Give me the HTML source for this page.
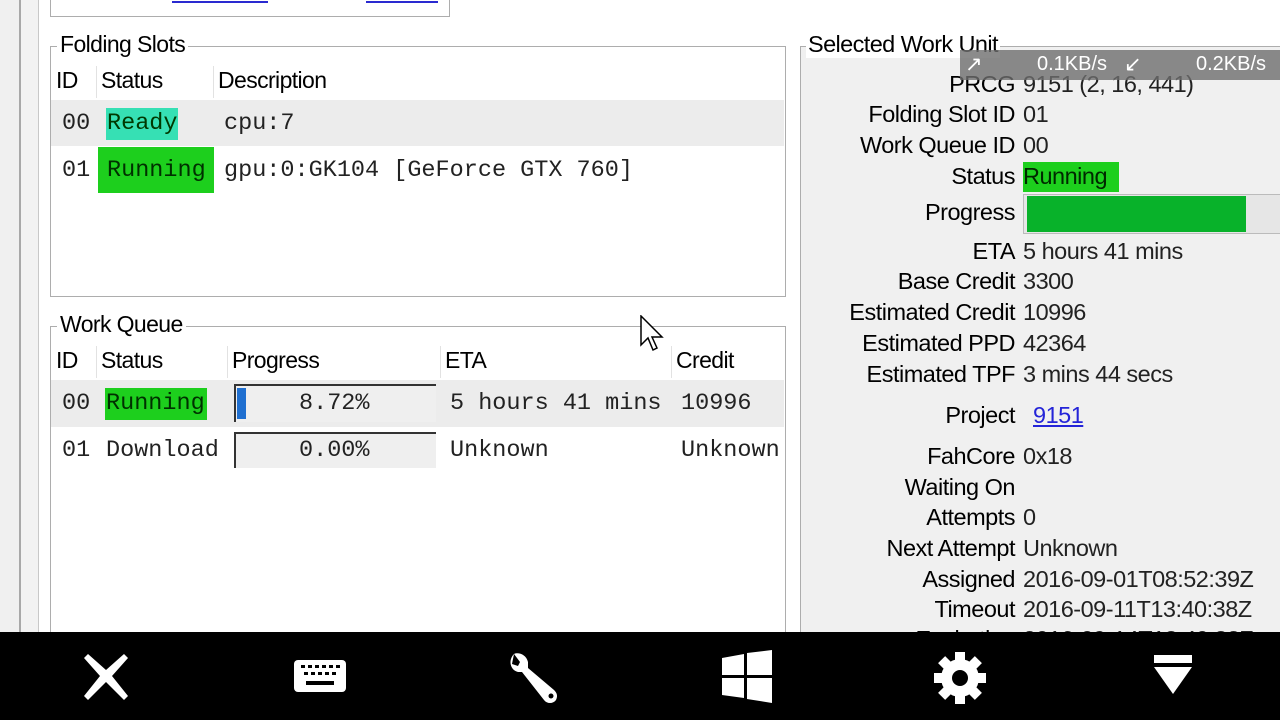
<!DOCTYPE html>
<html><head><meta charset="utf-8"><style>
*{margin:0;padding:0;box-sizing:border-box}
body{width:1280px;height:720px;overflow:hidden;background:#fff;position:relative;font-family:"Liberation Sans",sans-serif;color:#000}
.a{position:absolute;white-space:nowrap}
.s{font-size:23px;letter-spacing:-0.6px}
.m{font-family:"Liberation Mono",monospace;font-size:23.5px;color:#222}
.box{position:absolute;border:1px solid #adadad}
.lbl{position:absolute;right:265px;font-size:23.5px;letter-spacing:-0.5px;text-align:right;white-space:nowrap}
.val{position:absolute;left:1023px;font-size:23.5px;letter-spacing:-0.5px;color:#222;white-space:nowrap}
.sep{position:absolute;width:1px;background:#e2e2e2}
.ic{position:absolute;top:650px}
</style></head><body>
<div class="a" style="left:0;top:0;width:19px;height:632px;background:#f0f0f0"></div>
<div class="a" style="left:19px;top:0;width:2px;height:632px;background:#a8a8a8"></div>
<div class="a" style="left:21px;top:0;width:17px;height:632px;background:#f2f2f2"></div>
<div class="a" style="left:38px;top:0;width:1px;height:632px;background:#c8c8c8"></div>

<!-- top box -->
<div class="box" style="left:50px;top:-10px;width:400px;height:27px"></div>
<div class="a" style="left:172px;top:1px;width:96px;height:2px;background:#2a2ad0"></div>
<div class="a" style="left:366px;top:1px;width:72px;height:2px;background:#2a2ad0"></div>

<!-- Folding slots -->
<div class="box" style="left:50px;top:46px;width:736px;height:251px"></div>
<div class="a s" style="left:57px;top:31px;background:#fff;padding:0 3px">Folding Slots</div>
<div class="sep" style="left:96px;top:66px;height:32px"></div>
<div class="sep" style="left:213px;top:66px;height:32px"></div>
<div class="a s" style="left:56px;top:67px">ID</div>
<div class="a s" style="left:101px;top:67px">Status</div>
<div class="a s" style="left:218px;top:67px">Description</div>
<div class="a" style="left:51px;top:100px;width:733px;height:46px;background:#ececec"></div>
<div class="a" style="left:106px;top:108px;width:72px;height:32px;background:#36e0b4"></div>
<div class="a" style="left:98px;top:147px;width:116px;height:46px;background:#1dcf1d"></div>
<div class="a m" style="left:62px;top:110px">00</div>
<div class="a m" style="left:107px;top:110px;color:#003800">Ready</div>
<div class="a m" style="left:224px;top:110px">cpu:7</div>
<div class="a m" style="left:62px;top:157px">01</div>
<div class="a m" style="left:107px;top:157px;color:#003000">Running</div>
<div class="a m" style="left:224px;top:157px">gpu:0:GK104 [GeForce GTX 760]</div>

<!-- Work queue -->
<div class="box" style="left:50px;top:326px;width:736px;height:320px"></div>
<div class="a s" style="left:57px;top:311px;background:#fff;padding:0 3px">Work Queue</div>
<div class="sep" style="left:96px;top:346px;height:32px"></div>
<div class="sep" style="left:227px;top:346px;height:32px"></div>
<div class="sep" style="left:440px;top:346px;height:32px"></div>
<div class="sep" style="left:671px;top:346px;height:32px"></div>
<div class="a s" style="left:56px;top:347px">ID</div>
<div class="a s" style="left:101px;top:347px">Status</div>
<div class="a s" style="left:232px;top:347px">Progress</div>
<div class="a s" style="left:445px;top:347px">ETA</div>
<div class="a s" style="left:676px;top:347px">Credit</div>
<div class="a" style="left:51px;top:380px;width:733px;height:47px;background:#ececec"></div>
<div class="a" style="left:105px;top:388px;width:102px;height:32px;background:#1dcf1d"></div>
<div class="a" style="left:234px;top:384px;width:202px;height:38px;background:#efefef;border-top:2px solid #333;border-left:2px solid #333"></div>
<div class="a" style="left:237px;top:388px;width:9px;height:31px;background:#1f6fd0"></div>
<div class="a" style="left:234px;top:432px;width:202px;height:36px;background:#efefef;border-top:2px solid #333;border-left:2px solid #333"></div>
<div class="a m" style="left:62px;top:390px">00</div>
<div class="a m" style="left:106px;top:390px;color:#003000">Running</div>
<div class="a m" style="left:299px;top:390px">8.72%</div>
<div class="a m" style="left:450px;top:390px">5 hours 41 mins</div>
<div class="a m" style="left:681px;top:390px">10996</div>
<div class="a m" style="left:62px;top:437px">01</div>
<div class="a m" style="left:106px;top:437px">Download</div>
<div class="a m" style="left:299px;top:437px">0.00%</div>
<div class="a m" style="left:450px;top:437px">Unknown</div>
<div class="a m" style="left:681px;top:437px">Unknown</div>

<!-- right panel -->
<div class="a" style="left:786px;top:0;width:494px;height:632px;background:#fff"></div>
<div class="box" style="left:800px;top:46px;width:500px;height:600px;background:#f0f0f0"></div>
<div class="a s" style="left:806px;top:31px;background:#fff;padding:0 2px;font-size:23.5px">Selected Work Unit</div>
<div class="lbl" style="top:71px">PRCG</div><div class="val" style="top:71px">9151 (2, 16, 441)</div>
<div class="lbl" style="top:101px">Folding Slot ID</div><div class="val" style="top:101px">01</div>
<div class="lbl" style="top:132px">Work Queue ID</div><div class="val" style="top:132px">00</div>
<div class="a" style="left:1023px;top:162px;width:96px;height:30px;background:#1dcf1d"></div>
<div class="lbl" style="top:163px">Status</div><div class="val" style="top:163px;color:#002800">Running</div>
<div class="a" style="left:1023px;top:194px;width:260px;height:40px;background:#e6e6e6;border:1px solid #bbb"></div>
<div class="a" style="left:1027px;top:196px;width:219px;height:36px;background:#08b22a"></div>
<div class="lbl" style="top:199px">Progress</div>
<div class="lbl" style="top:238px">ETA</div><div class="val" style="top:238px">5 hours 41 mins</div>
<div class="lbl" style="top:268px">Base Credit</div><div class="val" style="top:268px">3300</div>
<div class="lbl" style="top:299px">Estimated Credit</div><div class="val" style="top:299px">10996</div>
<div class="lbl" style="top:330px">Estimated PPD</div><div class="val" style="top:330px">42364</div>
<div class="lbl" style="top:361px">Estimated TPF</div><div class="val" style="top:361px">3 mins 44 secs</div>
<div class="lbl" style="top:402px">Project</div><div class="val" style="top:402px;left:1033px;color:#2424d8;text-decoration:underline">9151</div>
<div class="lbl" style="top:443px">FahCore</div><div class="val" style="top:443px">0x18</div>
<div class="lbl" style="top:474px">Waiting On</div>
<div class="lbl" style="top:504px">Attempts</div><div class="val" style="top:504px">0</div>
<div class="lbl" style="top:535px">Next Attempt</div><div class="val" style="top:535px">Unknown</div>
<div class="lbl" style="top:566px">Assigned</div><div class="val" style="top:566px">2016-09-01T08:52:39Z</div>
<div class="lbl" style="top:596px">Timeout</div><div class="val" style="top:596px">2016-09-11T13:40:38Z</div>
<div class="lbl" style="top:626px">Expiration</div><div class="val" style="top:626px">2016-09-14T13:40:38Z</div>

<!-- net overlay -->
<div class="a" style="left:960px;top:50px;width:320px;height:30px;background:rgba(110,110,110,0.8)"></div>
<div class="a" style="left:965px;top:52px;color:#fff;font-size:21px">↗</div>
<div class="a" style="left:1037px;top:53px;color:#fff;font-size:20px">0.1KB/s</div>
<div class="a" style="left:1124px;top:52px;color:#fff;font-size:21px">↙</div>
<div class="a" style="left:1196px;top:53px;color:#fff;font-size:20px">0.2KB/s</div>

<!-- cursor -->
<svg class="a" style="left:640px;top:315px" width="26" height="40" viewBox="0 0 26 40"><path d="M1 1 L1 30 L8 23 L13 35 L17 33 L12 22 L22 22 Z" fill="#fff" stroke="#000" stroke-width="1.5"/></svg>

<!-- bottom bar -->
<div class="a" style="left:0;top:632px;width:1280px;height:88px;background:#000"></div>
<svg class="ic" style="left:80px" width="52" height="52" viewBox="0 0 52 52"><path d="M8 4 L26 20 L44 4 L48 8 L32 26 L48 46 L44 50 L26 32 L8 50 L4 46 L20 26 L4 8 Z" fill="#fff"/></svg>
<svg class="ic" style="left:292px" width="56" height="52" viewBox="0 0 56 52"><rect x="2" y="10" width="52" height="32" rx="4" fill="#fff"/><g fill="#000"><rect x="9" y="15" width="4" height="3"/><rect x="16" y="15" width="4" height="3"/><rect x="23" y="15" width="4" height="3"/><rect x="30" y="15" width="4" height="3"/><rect x="37" y="15" width="4" height="3"/><rect x="44" y="15" width="4" height="3"/><rect x="12" y="22" width="4" height="3"/><rect x="19" y="22" width="4" height="3"/><rect x="26" y="22" width="4" height="3"/><rect x="33" y="22" width="4" height="3"/><rect x="40" y="22" width="4" height="3"/><rect x="14" y="31" width="28" height="4"/></g></svg>
<svg class="ic" style="left:506px" width="56" height="56" viewBox="0 0 56 56"><path d="M8 4 C2 10 4 20 12 22 L16 22 L38 50 C41 54 47 54 50 50 C52 46 51 43 48 40 L22 18 L22 12 C20 4 12 2 8 4 L14 12 L12 16 L6 14 Z" fill="#fff"/><circle cx="45" cy="46" r="2.5" fill="#000"/></svg>
<svg class="ic" style="left:720px" width="54" height="54" viewBox="0 0 54 54"><path d="M2 8 L24 4 L24 25 L2 25 Z M27 3 L52 0 L52 25 L27 25 Z M2 28 L24 28 L24 48 L2 45 Z M27 28 L52 28 L52 53 L27 49 Z" fill="#fff"/></svg>
<svg class="ic" style="left:932px" width="56" height="56" viewBox="0 0 56 56"><g fill="#fff" transform="translate(28 28)"><circle r="19"/><g><rect x="-5" y="-26" width="10" height="12"/><rect x="-5" y="14" width="10" height="12"/><rect x="-26" y="-5" width="12" height="10"/><rect x="14" y="-5" width="12" height="10"/><rect x="-5" y="-26" width="10" height="12" transform="rotate(45)"/><rect x="-5" y="-26" width="10" height="12" transform="rotate(135)"/><rect x="-5" y="-26" width="10" height="12" transform="rotate(225)"/><rect x="-5" y="-26" width="10" height="12" transform="rotate(315)"/></g></g><circle cx="28" cy="28" r="8" fill="#000"/></svg>
<svg class="ic" style="left:1150px" width="46" height="52" viewBox="0 0 46 52"><rect x="4" y="5" width="38" height="8" fill="#fff"/><path d="M4 17 L42 17 L23 44 Z" fill="#fff"/></svg>
</body></html>
